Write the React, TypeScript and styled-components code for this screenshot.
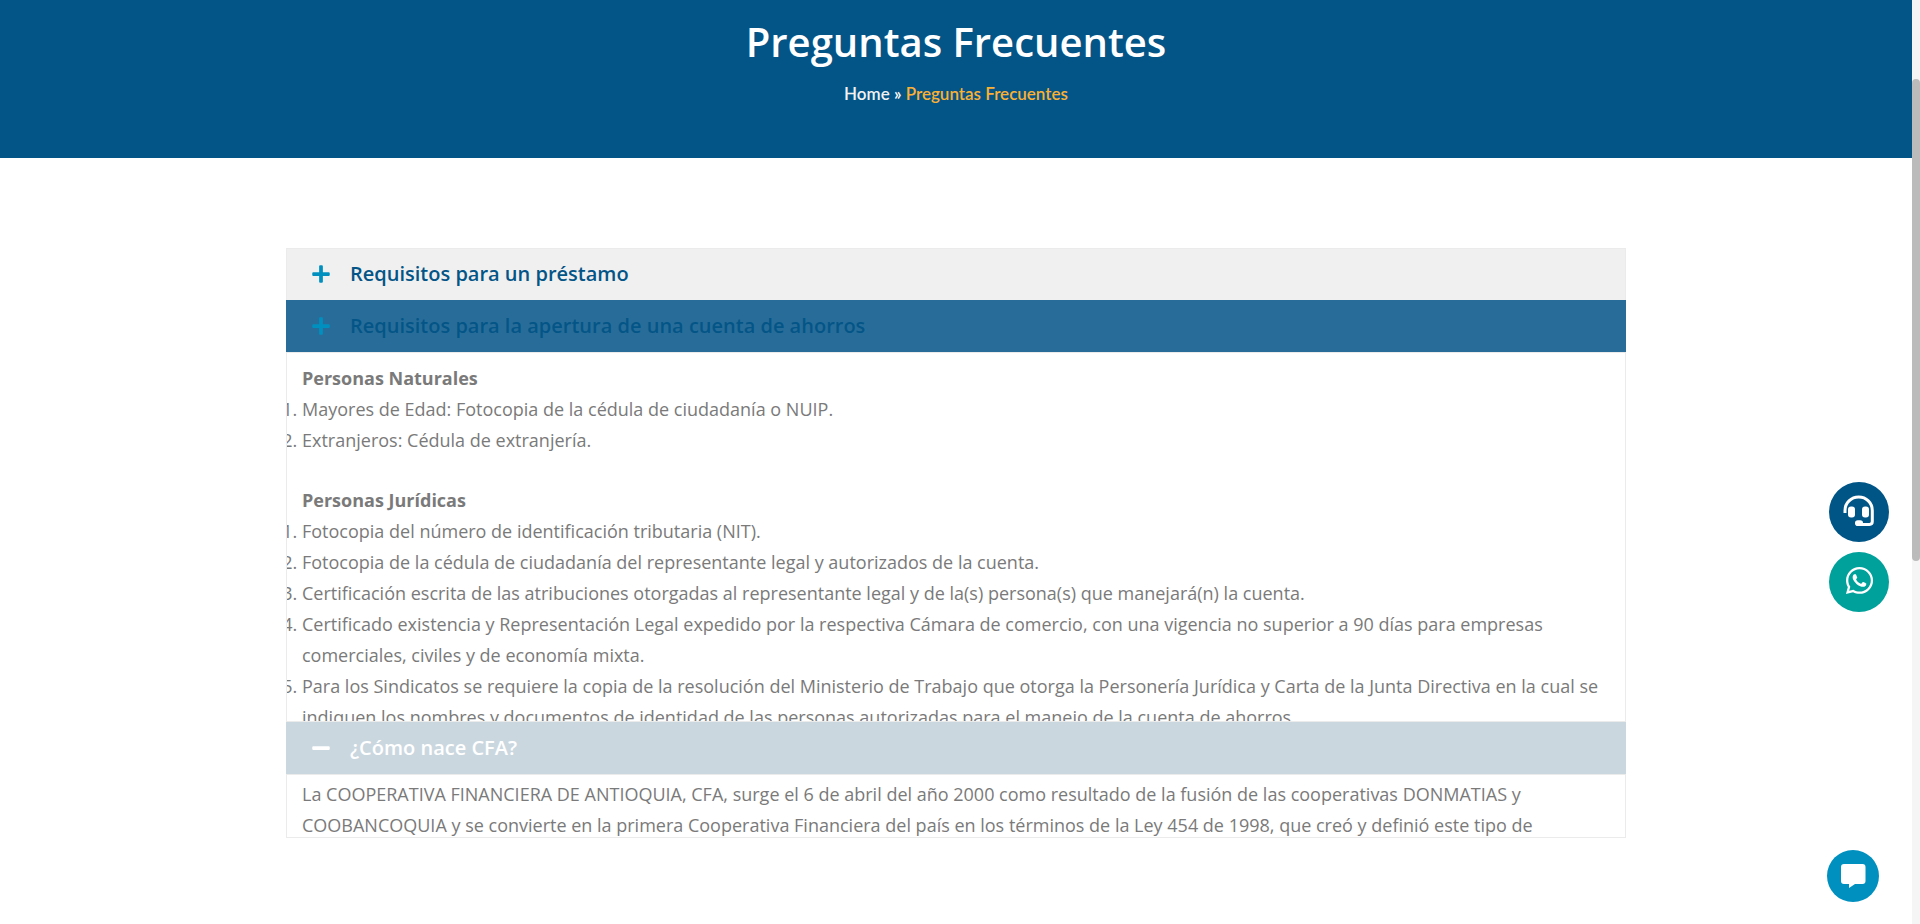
import React, { useState } from "react";
import styled, { createGlobalStyle } from "styled-components";
import { FaMinus, FaPlus, FaWhatsapp } from "react-icons/fa";

const GlobalStyle = createGlobalStyle`
  * { box-sizing: border-box; }
  body {
    margin: 0;
    background: #ffffff;
    color: #7a7a7a;
    font-family: "Open Sans", "Noto Sans", sans-serif;
    font-size: 18px;
    line-height: 31px;
  }
`;

const Page = styled.div`
  padding-right: 8px;
`;

const Hero = styled.header`
  display: flex;
  flex-direction: column;
  align-items: center;
  padding: 18px 16px 48px;
  background: #045587;
  color: #ffffff;
`;

const Title = styled.h1`
  margin: 0;
  font-size: 40px;
  font-weight: 600;
  line-height: 48px;
`;

const Breadcrumb = styled.nav`
  margin-top: 12px;
  font-family: Lato, "Open Sans", sans-serif;
  font-size: 17px;
  font-weight: 600;
  line-height: 32px;
`;

const Crumb = styled.a`
  color: #f2f2f2;
  text-decoration: none;
`;

const CurrentCrumb = styled.span`
  color: #fbb034;
`;

const Main = styled.main`
  padding: 90px 16px 86px;
`;

const Accordion = styled.section`
  max-width: 1340px;
  margin: 0 auto;
`;

type Tone = "idle" | "hover" | "opening";

const tones: Record<Tone, { background: string; border: string; text: string; icon: string }> = {
  idle: { background: "#f0f0f0", border: "#ebebeb", text: "#045587", icon: "#0090bf" },
  hover: { background: "#286d99", border: "#286d99", text: "#045587", icon: "#0090bf" },
  opening: { background: "#cbd7df", border: "#cbd7df", text: "#ffffff", icon: "#ffffff" },
};

const ItemTitle = styled.h2`
  margin: 0;
`;

const Toggle = styled.button<{ $tone: Tone }>`
  display: flex;
  align-items: center;
  gap: 20px;
  width: 100%;
  height: 52px;
  padding: 0 25px 2px;
  border: 1px solid ${(p) => tones[p.$tone].border};
  border-bottom: 0;
  background: ${(p) => tones[p.$tone].background};
  color: ${(p) => tones[p.$tone].text};
  font-family: inherit;
  font-size: 20px;
  font-weight: 600;
  line-height: 20px;
  text-align: left;
  cursor: pointer;

  svg {
    width: 18px;
    height: 20px;
    flex: none;
    color: ${(p) => tones[p.$tone].icon};
  }
`;

const Panel = styled.div<{ $height: number }>`
  height: ${(p) => p.$height}px;
  padding: 10px 15px 0;
  overflow: hidden;
  border: 1px solid #ebebeb;
`;

const ClosingPanel = styled(Panel)`
  padding-top: 4px;
`;

const Group = styled.section`
  & + & { margin-top: 29px; }
`;

const GroupTitle = styled.h3`
  margin: 0;
  font-size: 18px;
  font-weight: 700;
`;

const List = styled.ol`
  margin: 0;
  padding: 0;
`;

const Paragraph = styled.p`
  margin: 0;
`;

const FloatingStack = styled.aside`
  position: fixed;
  right: 31px;
  top: 482px;
  display: flex;
  flex-direction: column;
  gap: 10px;
`;

const RoundLink = styled.a<{ $color: string }>`
  display: flex;
  align-items: center;
  justify-content: center;
  width: 60px;
  height: 60px;
  padding-bottom: 3px;
  border-radius: 50%;
  background: ${(p) => p.$color};
  color: #ffffff;
`;

const ChatButton = styled.button`
  position: fixed;
  right: 41px;
  bottom: 22px;
  display: flex;
  align-items: center;
  justify-content: center;
  width: 52px;
  height: 52px;
  padding: 0;
  border: 0;
  border-radius: 50%;
  background: #0090bf;
  cursor: pointer;
`;

const ScrollTrack = styled.div`
  position: fixed;
  top: 0;
  right: 0;
  bottom: 0;
  width: 8px;
  padding-top: 79px;
  background: #f5f5f5;
`;

const ScrollThumb = styled.div`
  height: 482px;
  border-radius: 4px;
  background: #bbbbbb;
`;

const HeadsetIcon = () => (
  <svg width="32" height="32" viewBox="0 0 32 32" fill="none" aria-hidden="true">
    <path
      d="M2 18V15.5C2 7.8 8.2 2 15.7 2S29.3 7.8 29.3 15.5V26.5C29.3 28.3 28.2 29.4 26.5 29.4H15"
      stroke="#fff"
      strokeWidth="3"
    />
    <rect x="5" y="11.5" width="7" height="11" rx="3" fill="#fff" />
    <rect x="19" y="11.5" width="7" height="11" rx="3" fill="#fff" />
    <rect x="12" y="25.3" width="8" height="5.7" rx="2.8" fill="#fff" />
  </svg>
);

const ChatIcon = () => (
  <svg width="26" height="26" viewBox="0 0 26 26" aria-hidden="true">
    <path
      d="M4 1H22.5Q25.5 1 25.5 4V18Q25.5 21 22.5 21H15L9 25V21H4Q1 21 1 18V4Q1 1 4 1Z"
      fill="#fff"
    />
  </svg>
);

const groups = [
  {
    title: "Personas Naturales",
    items: [
      "Mayores de Edad: Fotocopia de la cédula de ciudadanía o NUIP.",
      "Extranjeros: Cédula de extranjería.",
    ],
  },
  {
    title: "Personas Jurídicas",
    items: [
      "Fotocopia del número de identificación tributaria (NIT).",
      "Fotocopia de la cédula de ciudadanía del representante legal y autorizados de la cuenta.",
      "Certificación escrita de las atribuciones otorgadas al representante legal y de la(s) persona(s) que manejará(n) la cuenta.",
      "Certificado existencia y Representación Legal expedido por la respectiva Cámara de comercio, con una vigencia no superior a 90 días para empresas comerciales, civiles y de economía mixta.",
      "Para los Sindicatos se requiere la copia de la resolución del Ministerio de Trabajo que otorga la Personería Jurídica y Carta de la Junta Directiva en la cual se indiquen los nombres y documentos de identidad de las personas autorizadas para el manejo de la cuenta de ahorros.",
    ],
  },
];

type ItemProps = {
  title: string;
  tone: Tone;
  open: boolean;
  onToggle: () => void;
};

const ItemHeader = ({ title, tone, open, onToggle }: ItemProps) => (
  <ItemTitle>
    <Toggle type="button" $tone={tone} aria-expanded={open} onClick={onToggle}>
      {tone === "opening" ? <FaMinus aria-hidden="true" /> : <FaPlus aria-hidden="true" />}
      {title}
    </Toggle>
  </ItemTitle>
);

export default function App() {
  const [open, setOpen] = useState([false, true, true]);
  const toggle = (index: number) =>
    setOpen((current) => current.map((value, i) => (i === index ? !value : value)));

  return (
    <>
      <GlobalStyle />
      <Page>
        <Hero>
          <Title>Preguntas Frecuentes</Title>
          <Breadcrumb aria-label="Ruta de navegación">
            <Crumb href="#home">Home</Crumb> » <CurrentCrumb>Preguntas Frecuentes</CurrentCrumb>
          </Breadcrumb>
        </Hero>
        <Main>
          <Accordion>
            <ItemHeader
              title="Requisitos para un préstamo"
              tone="idle"
              open={open[0]}
              onToggle={() => toggle(0)}
            />
            <ItemHeader
              title="Requisitos para la apertura de una cuenta de ahorros"
              tone="hover"
              open={open[1]}
              onToggle={() => toggle(1)}
            />
            {open[1] && (
              <Panel $height={370}>
                {groups.map((group) => (
                  <Group key={group.title}>
                    <GroupTitle>{group.title}</GroupTitle>
                    <List>
                      {group.items.map((item) => (
                        <li key={item}>{item}</li>
                      ))}
                    </List>
                  </Group>
                ))}
              </Panel>
            )}
            <ItemHeader
              title="¿Cómo nace CFA?"
              tone="opening"
              open={open[2]}
              onToggle={() => toggle(2)}
            />
            {open[2] && (
              <ClosingPanel $height={64}>
                <Paragraph>
                  La COOPERATIVA FINANCIERA DE ANTIOQUIA, CFA, surge el 6 de abril del año 2000 como
                  resultado de la fusión de las cooperativas DONMATIAS y COOBANCOQUIA y se convierte
                  en la primera Cooperativa Financiera del país en los términos de la Ley 454 de
                  1998, que creó y definió este tipo de
                </Paragraph>
              </ClosingPanel>
            )}
          </Accordion>
        </Main>
      </Page>
      <FloatingStack>
        <RoundLink href="#contacto" $color="#005587" aria-label="Contacto">
          <HeadsetIcon />
        </RoundLink>
        <RoundLink href="#whatsapp" $color="#00a19b" aria-label="WhatsApp">
          <FaWhatsapp size={31} aria-hidden="true" />
        </RoundLink>
      </FloatingStack>
      <ChatButton type="button" aria-label="Abrir chat">
        <ChatIcon />
      </ChatButton>
      <ScrollTrack aria-hidden="true">
        <ScrollThumb />
      </ScrollTrack>
    </>
  );
}
